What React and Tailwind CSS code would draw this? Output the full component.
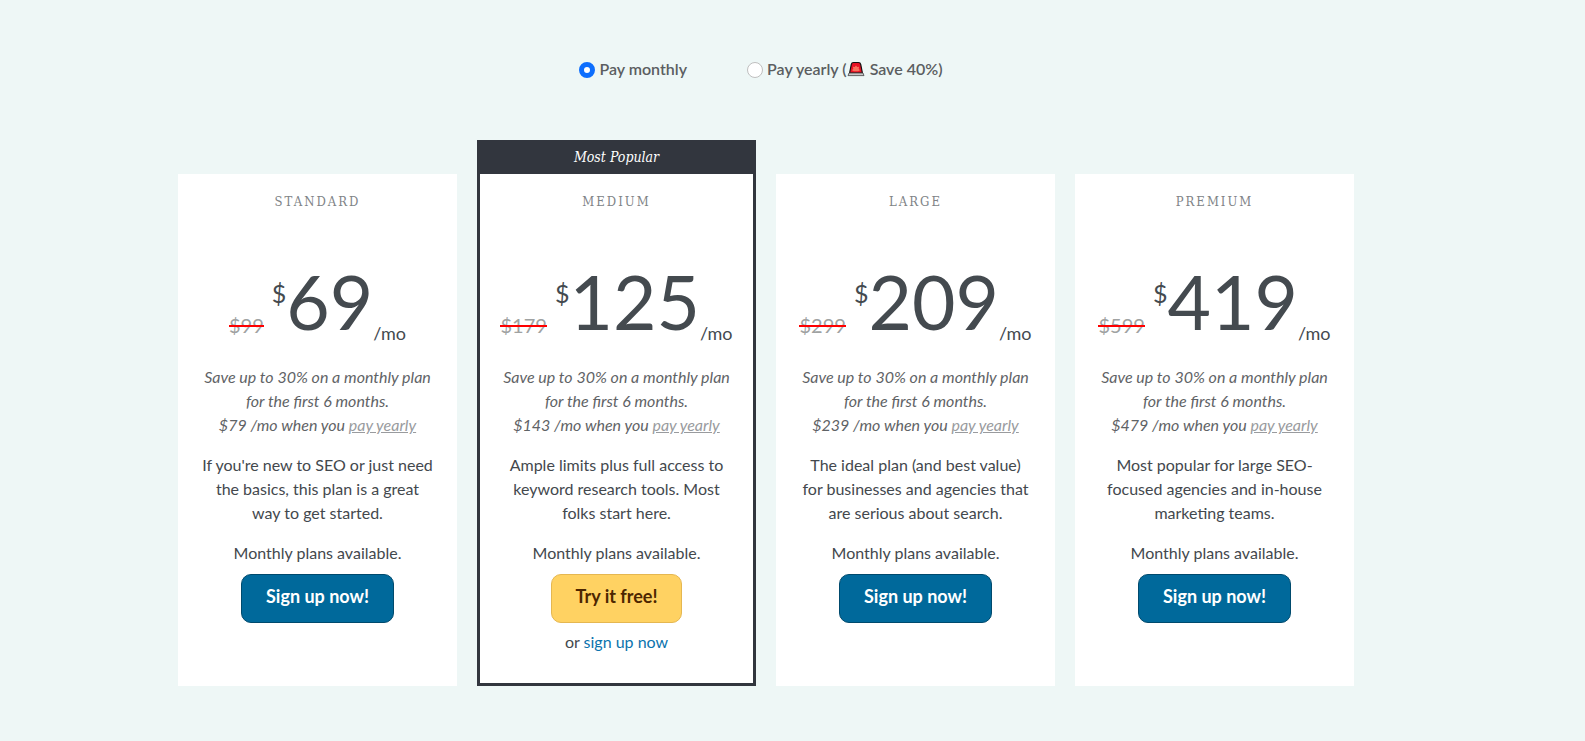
import { useState } from "react";

const plans = [
  {
    name: "Standard",
    oldPrice: 99,
    price: 69,
    yearly: 79,
    description:
      "If you're new to SEO or just need the basics, this plan is a great way to get started.",
  },
  {
    name: "Medium",
    oldPrice: 179,
    price: 125,
    yearly: 143,
    description:
      "Ample limits plus full access to keyword research tools. Most folks start here.",
    popular: true,
  },
  {
    name: "Large",
    oldPrice: 299,
    price: 209,
    yearly: 239,
    description:
      "The ideal plan (and best value) for businesses and agencies that are serious about search.",
  },
  {
    name: "Premium",
    oldPrice: 599,
    price: 419,
    yearly: 479,
    description:
      "Most popular for large SEO-focused agencies and in-house marketing teams.",
  },
];

function SirenIcon() {
  return (
    <svg
      viewBox="0 0 18 16"
      className="inline-block w-[18px] h-4 -mt-1 mr-px"
      aria-hidden="true"
    >
      <path
        d="M2.6 12L4.3 3.4C4.6 2 5.4 1.5 6.6 1.5h4.8c1.2 0 2 .5 2.3 1.9l1.7 8.6z"
        fill="#e81224"
        stroke="#111"
        strokeWidth="1.2"
        strokeLinejoin="round"
      />
      <path
        d="M9 4.4l1.2 1.6 1.9-.3-.4 2 1.3 1.5-1.8 1H6.8L5 9.2l1.3-1.5-.4-2 1.9.3z"
        fill="#f9705c"
      />
      <path
        d="M2 12h14l1 2.6H1z"
        fill="#c8c8c8"
        stroke="#444"
        strokeWidth="0.8"
        strokeLinejoin="round"
      />
    </svg>
  );
}

function BillingOption({ value, billing, onChange, children }) {
  return (
    <label className="flex items-center gap-1 font-semibold text-[#5b5e61]">
      <input
        type="radio"
        name="billing"
        value={value}
        checked={billing === value}
        onChange={() => onChange(value)}
        className="appearance-none w-4 h-4 mt-px rounded-full bg-white border border-[#bfbfbf] checked:border-5 checked:border-[#0d6efd]"
      />
      <span>{children}</span>
    </label>
  );
}

function PlanCard({ plan, onPayYearly }) {
  return (
    <div className="flex flex-col">
      {/* Banner */}
      <div
        className={`h-[34px] flex items-center justify-center ${
          plan.popular ? "bg-[#32363e]" : ""
        }`}
      >
        {plan.popular && (
          <span className="font-['Roboto_Slab','DejaVu_Serif_Condensed','DejaVu_Serif',serif] italic text-[14px] text-white">
            Most Popular
          </span>
        )}
      </div>

      <div
        className={`flex-1 bg-white pt-4 text-center ${
          plan.popular
            ? "border-x-3 border-b-3 border-[#32363e] px-5 pb-[29px]"
            : "px-[23px] pb-8"
        }`}
      >
        <h2 className="font-['Roboto_Slab','DejaVu_Serif_Condensed','DejaVu_Serif',serif] font-light text-[13px] leading-6 tracking-[2px] uppercase text-[#808386]">
          {plan.name}
        </h2>

        {/* Price */}
        <div className="mt-[49px] flex justify-center items-end text-[#444a4f]">
          <s className="relative pb-2 mr-2 text-[20px] leading-6 text-[#a0a2a2] no-underline">
            ${plan.oldPrice}
            <span className="absolute inset-x-0 top-3 h-0.5 bg-[#f00]" />
          </s>
          <span className="self-start mt-3.5 text-[25px] leading-8">$</span>
          <span className="pb-1.5 text-[75px] leading-[76px]">
            {plan.price}
          </span>
          <span className="text-[18px] leading-6">/mo</span>
        </div>

        {/* Details */}
        <p className="mt-5 italic text-[#5f6366]">
          Save up to 30% on a monthly plan for the first 6 months.
          <br />${plan.yearly} /mo when you{" "}
          <button
            type="button"
            onClick={onPayYearly}
            className="italic underline text-[#999b9e]"
          >
            pay yearly
          </button>
        </p>
        <p className="mt-4 text-[#43484d]">{plan.description}</p>
        <p className="mt-4 text-[#43484d]">Monthly plans available.</p>

        {/* Actions */}
        {plan.popular ? (
          <>
            <button
              type="button"
              className="mt-[9px] h-[49px] px-6 pb-1.5 rounded-[10px] border border-[#e5b751] bg-[#ffd262] text-[18px] font-bold text-[#4d2600]"
            >
              Try it free!
            </button>
            <p className="mt-[7px] text-[#43484d]">
              or{" "}
              <a href="#signup" className="text-[#0b73ad]">
                sign up now
              </a>
            </p>
          </>
        ) : (
          <button
            type="button"
            className="mt-[9px] h-[49px] px-6 pb-1.5 rounded-[10px] border border-[#004a6d] bg-[#00699b] text-[18px] font-bold text-white"
          >
            Sign up now!
          </button>
        )}
      </div>
    </div>
  );
}

function App() {
  const [billing, setBilling] = useState("monthly");

  return (
    <main className="min-h-screen bg-[#eef7f6] pt-[57px] pb-[55px] pl-4 pr-[69px] font-['Lato',sans-serif] text-base leading-6">
      {/* Billing toggle */}
      <div className="flex justify-center gap-[60px] mb-[59px] pr-[10px]">
        <BillingOption
          value="monthly"
          billing={billing}
          onChange={setBilling}
        >
          Pay monthly
        </BillingOption>
        <BillingOption value="yearly" billing={billing} onChange={setBilling}>
          Pay yearly (<SirenIcon /> Save 40%)
        </BillingOption>
      </div>

      {/* Plans */}
      <div className="max-w-[1176px] mx-auto grid grid-cols-4 gap-5">
        {plans.map((plan) => (
          <PlanCard
            key={plan.name}
            plan={plan}
            onPayYearly={() => setBilling("yearly")}
          />
        ))}
      </div>
    </main>
  );
}

export default App;
